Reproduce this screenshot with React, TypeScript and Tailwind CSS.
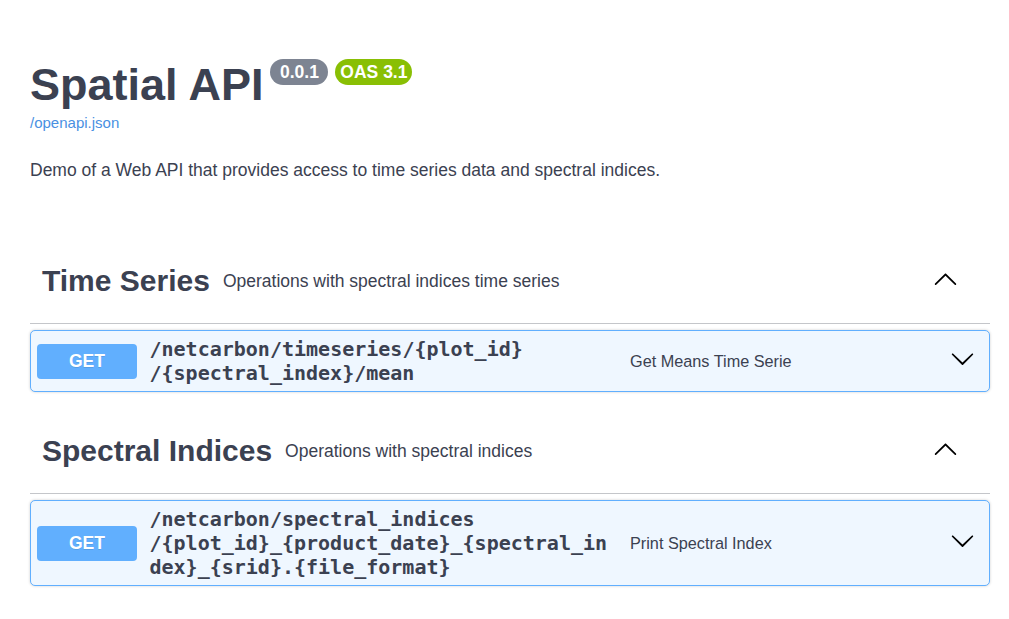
const sans = { fontFamily: '"Liberation Sans", Arial, sans-serif' };

function ChevronUp() {
  return (
    <svg width="25" height="25" viewBox="0 0 20 20" className="fill-black">
      <path d="M17.418 14.908c.272.268.709.268.979 0s.271-.701 0-.969l-7.908-7.83c-.27-.268-.707-.268-.979 0l-7.908 7.83c-.27.268-.27.701 0 .969.271.268.709.268.979 0L10 7.767l7.418 7.141z" />
    </svg>
  );
}

function ChevronDown() {
  return (
    <svg width="25" height="25" viewBox="0 0 20 20" className="fill-black">
      <path d="M17.418 6.109c.272-.268.709-.268.979 0s.271.701 0 .969l-7.908 7.83c-.27.268-.707.268-.979 0l-7.908-7.83c-.27-.268-.27-.701 0-.969.271-.268.709-.268.979 0L10 13.25l7.418-7.141z" />
    </svg>
  );
}

function Operation({ parts, summary }: { parts: string[]; summary: string }) {
  return (
    <div className="mt-[6px] flex items-center rounded-[5px] border border-[#61affe] bg-[#eff7ff] px-[6px] py-[6px] shadow-[0_0_3px_rgba(0,0,0,0.19)]">
      <span className="flex h-[35px] w-[100px] shrink-0 items-center justify-center rounded-[4px] bg-[#61affe] text-[17.5px] font-bold text-white [text-shadow:0_1px_0_rgba(0,0,0,0.1)]">
        GET
      </span>
      <span
        className="w-[490px] shrink-0 px-[12.5px] text-[20px] font-bold leading-[24px] text-[#3b4151] [overflow-wrap:anywhere]"
        style={{ fontFamily: '"DejaVu Sans Mono", monospace' }}
      >
        {parts.map((p, i) => (
          <span key={i}>
            {i > 0 && <wbr />}
            {p}
          </span>
        ))}
      </span>
      <span className="flex-1 pl-[3px] text-[16.25px] text-[#3b4151]">{summary}</span>
      <span className="mb-[5px] pr-[8px]">
        <ChevronDown />
      </span>
    </div>
  );
}

function TagSection({
  name,
  desc,
  children,
}: {
  name: string;
  desc: string;
  children: React.ReactNode;
}) {
  return (
    <section>
      <div className="flex h-[85px] items-center border-b border-[#3b4151]/30 pl-[12px] pr-[32px]">
        <h3 className="text-[30px] font-bold leading-[36px] text-[#3b4151]">{name}</h3>
        <small className="ml-[13px] flex-1 text-[17.5px] leading-[24px] text-[#3b4151]">{desc}</small>
        <span className="mb-[5px]">
          <ChevronUp />
        </span>
      </div>
      {children}
    </section>
  );
}

export default function App() {
  return (
    <div className="min-h-screen bg-white text-[#3b4151]" style={sans}>
      <div className="pl-[30px] pr-[19px] pt-[59px]">
        <div className="flex items-start">
          <h2 className="text-[45px] font-bold leading-[52px] text-[#3b4151]">Spatial API</h2>
          <span className="ml-[7px] flex h-[26px] w-[58px] items-center justify-center rounded-full bg-[#7d8492] text-[17.5px] font-bold text-white">
            0.0.1
          </span>
          <span className="ml-[7px] flex h-[26px] w-[77px] items-center justify-center rounded-full bg-[#89bf04] text-[17.5px] font-bold text-white">
            OAS 3.1
          </span>
        </div>
        <a className="mt-[3px] block text-[15px] leading-[18px] text-[#4990e2]">/openapi.json</a>
        <p className="mt-[26px] text-[17.5px] leading-[24px]">
          Demo of a Web API that provides access to time series data and spectral indices.
        </p>

        <div className="mt-[57px]">
          <TagSection name="Time Series" desc="Operations with spectral indices time series">
            <Operation
              parts={["/netcarbon", "/timeseries", "/{plot_id}", "/{spectral_index}", "/mean"]}
              summary="Get Means Time Serie"
            />
          </TagSection>
          <div className="mt-[17px]">
            <TagSection name="Spectral Indices" desc="Operations with spectral indices">
              <Operation
                parts={[
                  "/netcarbon",
                  "/spectral_indices",
                  "/{plot_id}_{product_date}_{spectral_index}_{srid}.{file_format}",
                ]}
                summary="Print Spectral Index"
              />
            </TagSection>
          </div>
        </div>
      </div>
    </div>
  );
}
